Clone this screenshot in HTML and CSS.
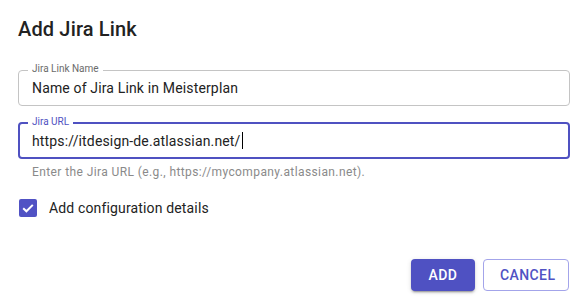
FILE: index.html
```html
<!DOCTYPE html>
<html lang="en">
<head>
<meta charset="utf-8">
<link rel="stylesheet" href="styles.css">
</head>
<body>
<div class="dialog">
  <h2 class="title">Add Jira Link</h2>
  <div class="field field-name">
    <div class="box">
      <span class="label">Jira Link Name</span>
      <span class="value">Name of Jira Link in Meisterplan</span>
    </div>
  </div>
  <div class="field field-url">
    <div class="box focused">
      <span class="label">Jira URL</span>
      <span class="value">https://itdesign-de.atlassian.net/<span class="caret"></span></span>
    </div>
    <div class="helper">Enter the Jira URL (e.g., https://mycompany.atlassian.net).</div>
  </div>
  <label class="check-row">
    <span class="checkbox">
      <svg width="18" height="18" viewBox="0 0 18 18"><path d="M4.2 9.2 L7.4 12.3 L13.8 5.9" fill="none" stroke="#fff" stroke-width="2"/></svg>
    </span>
    <span class="check-label">Add configuration details</span>
  </label>
  <div class="actions">
    <button class="btn btn-primary">ADD</button>
    <button class="btn btn-outline">CANCEL</button>
  </div>
</div>
</body>
</html>
```
FILE: styles.css
```css
html, body {
  margin: 0;
  padding: 0;
  background: #fff;
}
body {
  font-family: Roboto, "Liberation Sans", sans-serif;
  color: rgba(0, 0, 0, 0.87);
}
.dialog {
  width: 584px;
  height: 307px;
  box-sizing: border-box;
  padding: 13px 14px 0 18px;
  display: flex;
  flex-direction: column;
}
.title {
  margin: 0;
  font-size: 20px;
  font-weight: 500;
  line-height: 32px;
  letter-spacing: 0.15px;
  color: #222;
}
.field-name {
  margin-top: 25px;
}
.field-url {
  margin-top: 16px;
}
.box {
  position: relative;
  height: 36px;
  box-sizing: border-box;
  border: 1px solid #c4c4c4;
  border-radius: 4px;
  display: flex;
  align-items: center;
  padding-left: 13px;
}
.box.focused {
  border: 2px solid #4f51c1;
  padding-left: 12px;
  height: 37px;
}
.label {
  position: absolute;
  left: 9px;
  top: -8px;
  padding: 0 4px;
  background: #fff;
  font-size: 10px;
  line-height: 12px;
  color: #6b6b6b;
}
.focused .label {
  left: 8px;
  top: -8px;
  color: #4f51c1;
}
.value {
  font-size: 14px;
  line-height: 20px;
  letter-spacing: 0.15px;
  color: #222;
  display: flex;
  align-items: center;
}
.caret {
  display: inline-block;
  width: 1px;
  height: 17px;
  background: #000;
  margin-left: 1px;
}
.helper {
  margin-top: 5px;
  padding-left: 14px;
  font-size: 12px;
  line-height: 16px;
  color: #8a8a8a;
  letter-spacing: 0.4px;
}
.check-row {
  margin-top: 18px;
  display: flex;
  align-items: center;
  height: 20px;
}
.checkbox {
  width: 18px;
  height: 18px;
  margin-left: 1px;
  border-radius: 2px;
  background: #5052c4;
  display: flex;
}
.check-label {
  margin-left: 12px;
  font-size: 14px;
  line-height: 20px;
  letter-spacing: 0.15px;
  color: #222;
}
.actions {
  margin-top: 41px;
  display: flex;
  justify-content: flex-end;
  gap: 8px;
  padding-right: 1px;
}
.btn {
  height: 32px;
  box-sizing: border-box;
  border-radius: 4px;
  font-family: Roboto, "Liberation Sans", sans-serif;
  font-size: 14px;
  font-weight: 500;
  letter-spacing: 0.4px;
  padding: 0 16px;
}
.btn-primary {
  width: 64px;
  background: #4f51c2;
  color: #fff;
  border: none;
  box-shadow: 0 3px 1px -2px rgba(0,0,0,0.2), 0 2px 2px 0 rgba(0,0,0,0.14), 0 1px 5px 0 rgba(0,0,0,0.12);
}
.btn-outline {
  width: 86px;
  background: #fff;
  color: #5052c4;
  border: 1px solid #a3a4ea;
}
```
